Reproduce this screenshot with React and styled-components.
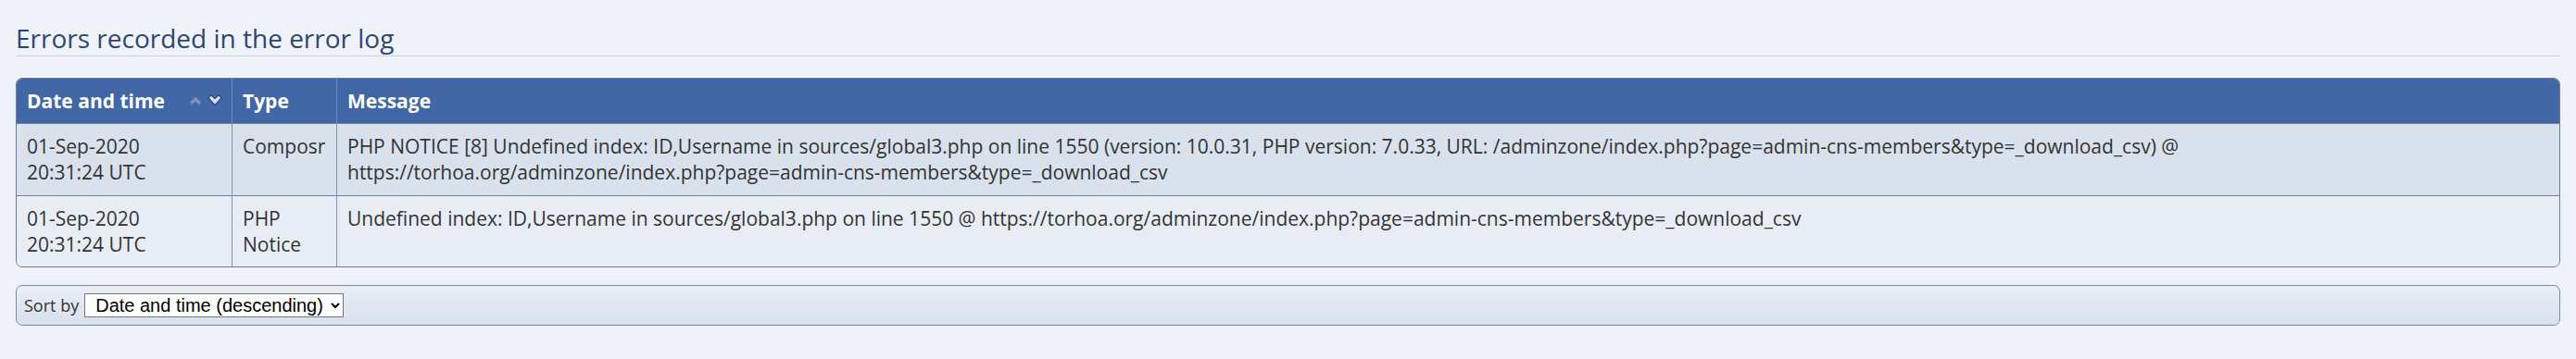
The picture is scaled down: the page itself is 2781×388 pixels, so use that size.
import React from 'react';
import styled, { createGlobalStyle } from 'styled-components';

const GlobalStyle = createGlobalStyle`
  html, body {
    margin: 0;
    padding: 0;
    background: #eff3f9;
  }
  body {
    font-family: "Open Sans", "Liberation Sans", sans-serif;
    color: #333;
  }
`;

const Page = styled.div`
  padding: 0 17px;
`;

const Title = styled.h1`
  margin: 23px 0 0;
  padding-bottom: 1px;
  font-size: 28px;
  line-height: 36px;
  font-weight: 400;
  color: #2f4670;
  border-bottom: 1.5px solid #c6cfdd;
`;

const Frame = styled.div`
  margin-top: 22.5px;
  border: 1.5px solid #6a7c98;
  border-radius: 7px;
  overflow: hidden;
`;

const Table = styled.table`
  width: 100%;
  table-layout: fixed;
  border-collapse: separate;
  border-spacing: 0;
`;

const HeadCell = styled.th`
  box-sizing: border-box;
  width: ${(p) => p.$width || 'auto'};
  padding: 10px 11px;
  background: #4267a6;
  color: #fff;
  font-size: 21px;
  line-height: 28.35px;
  font-weight: 700;
  text-align: left;
  border-right: ${(p) => (p.$last ? 'none' : '1.5px solid #7088b4')};
`;

const HeadInner = styled.div`
  display: flex;
  align-items: center;
  justify-content: space-between;
`;

const SortIcons = styled.span`
  display: flex;
  align-items: center;
  gap: 6px;
  margin-right: -1px;
`;

const Row = styled.tr`
  background: ${(p) => (p.$alt ? '#e8edf5' : '#d9e1ed')};
`;

const Cell = styled.td`
  box-sizing: border-box;
  padding: 10px 11px;
  font-size: 21px;
  line-height: 28.35px;
  color: #333;
  vertical-align: top;
  border-top: 1.5px solid #6f819d;
  border-right: ${(p) => (p.$last ? 'none' : '1.5px solid #8494ae')};
  word-wrap: break-word;
`;

const SortBar = styled.div`
  margin-top: 19px;
  height: 44px;
  box-sizing: border-box;
  display: flex;
  align-items: center;
  gap: 6px;
  padding: 0 8px;
  border: 1.5px solid #7b8ba4;
  border-radius: 7px;
  background: linear-gradient(to bottom, #e9eef6, #d8e0ec);
`;

const SortLabel = styled.label`
  font-size: 18px;
  color: #333;
`;

const Select = styled.select`
  height: 26px;
  font-family: "Liberation Sans", Arial, sans-serif;
  font-size: 20px;
  color: #000;
  background: #fff;
  border: 1.5px solid #767676;
  border-radius: 0;
  padding: 0 5px 0 7px;
`;

const UpArrow = () => (
  <svg width="14" height="10" viewBox="0 0 14 10">
    <polygon
      points="0.8,6.6 7,0.6 13.2,6.6 10.8,9.2 7,5.4 3.2,9.2"
      fill="#7e97c6"
      stroke="#5674ab"
      strokeWidth="1"
      strokeLinejoin="round"
    />
  </svg>
);

const DownArrow = () => (
  <svg width="16" height="13" viewBox="0 0 16 13">
    <polygon
      points="0.9,3.8 4,0.8 8,4.6 12,0.8 15.1,3.8 8,11.8"
      fill="#d6ddf0"
      stroke="#2c4881"
      strokeWidth="1.3"
      strokeLinejoin="round"
    />
  </svg>
);

const entries = [
  {
    date: '01-Sep-2020',
    time: '20:31:24 UTC',
    type: 'Composr',
    message:
      'PHP NOTICE [8] Undefined index: ID,Username in sources/global3.php on line 1550 (version: 10.0.31, PHP version: 7.0.33, URL: /adminzone/index.php?page=admin-cns-members&type=_download_csv) @ https://torhoa.org/adminzone/index.php?page=admin-cns-members&type=_download_csv',
  },
  {
    date: '01-Sep-2020',
    time: '20:31:24 UTC',
    type: 'PHP Notice',
    message:
      'Undefined index: ID,Username in sources/global3.php on line 1550 @ https://torhoa.org/adminzone/index.php?page=admin-cns-members&type=_download_csv',
  },
];

const App = () => (
  <Page>
    <GlobalStyle />
    <Title>Errors recorded in the error log</Title>
    <Frame>
      <Table>
        <thead>
          <tr>
            <HeadCell $width="233px">
              <HeadInner>
                <span>Date and time</span>
                <SortIcons>
                  <UpArrow />
                  <DownArrow />
                </SortIcons>
              </HeadInner>
            </HeadCell>
            <HeadCell $width="113px">Type</HeadCell>
            <HeadCell $last>Message</HeadCell>
          </tr>
        </thead>
        <tbody>
          {entries.map((entry, i) => (
            <Row key={i} $alt={i % 2 === 1}>
              <Cell>
                {entry.date}
                <br />
                {entry.time}
              </Cell>
              <Cell>{entry.type}</Cell>
              <Cell $last>{entry.message}</Cell>
            </Row>
          ))}
        </tbody>
      </Table>
    </Frame>
    <SortBar>
      <SortLabel htmlFor="sort">Sort by</SortLabel>
      <Select id="sort" defaultValue="date_desc">
        <option value="date_desc">Date and time (descending)</option>
        <option value="date_asc">Date and time (ascending)</option>
      </Select>
    </SortBar>
  </Page>
);

export default App;
